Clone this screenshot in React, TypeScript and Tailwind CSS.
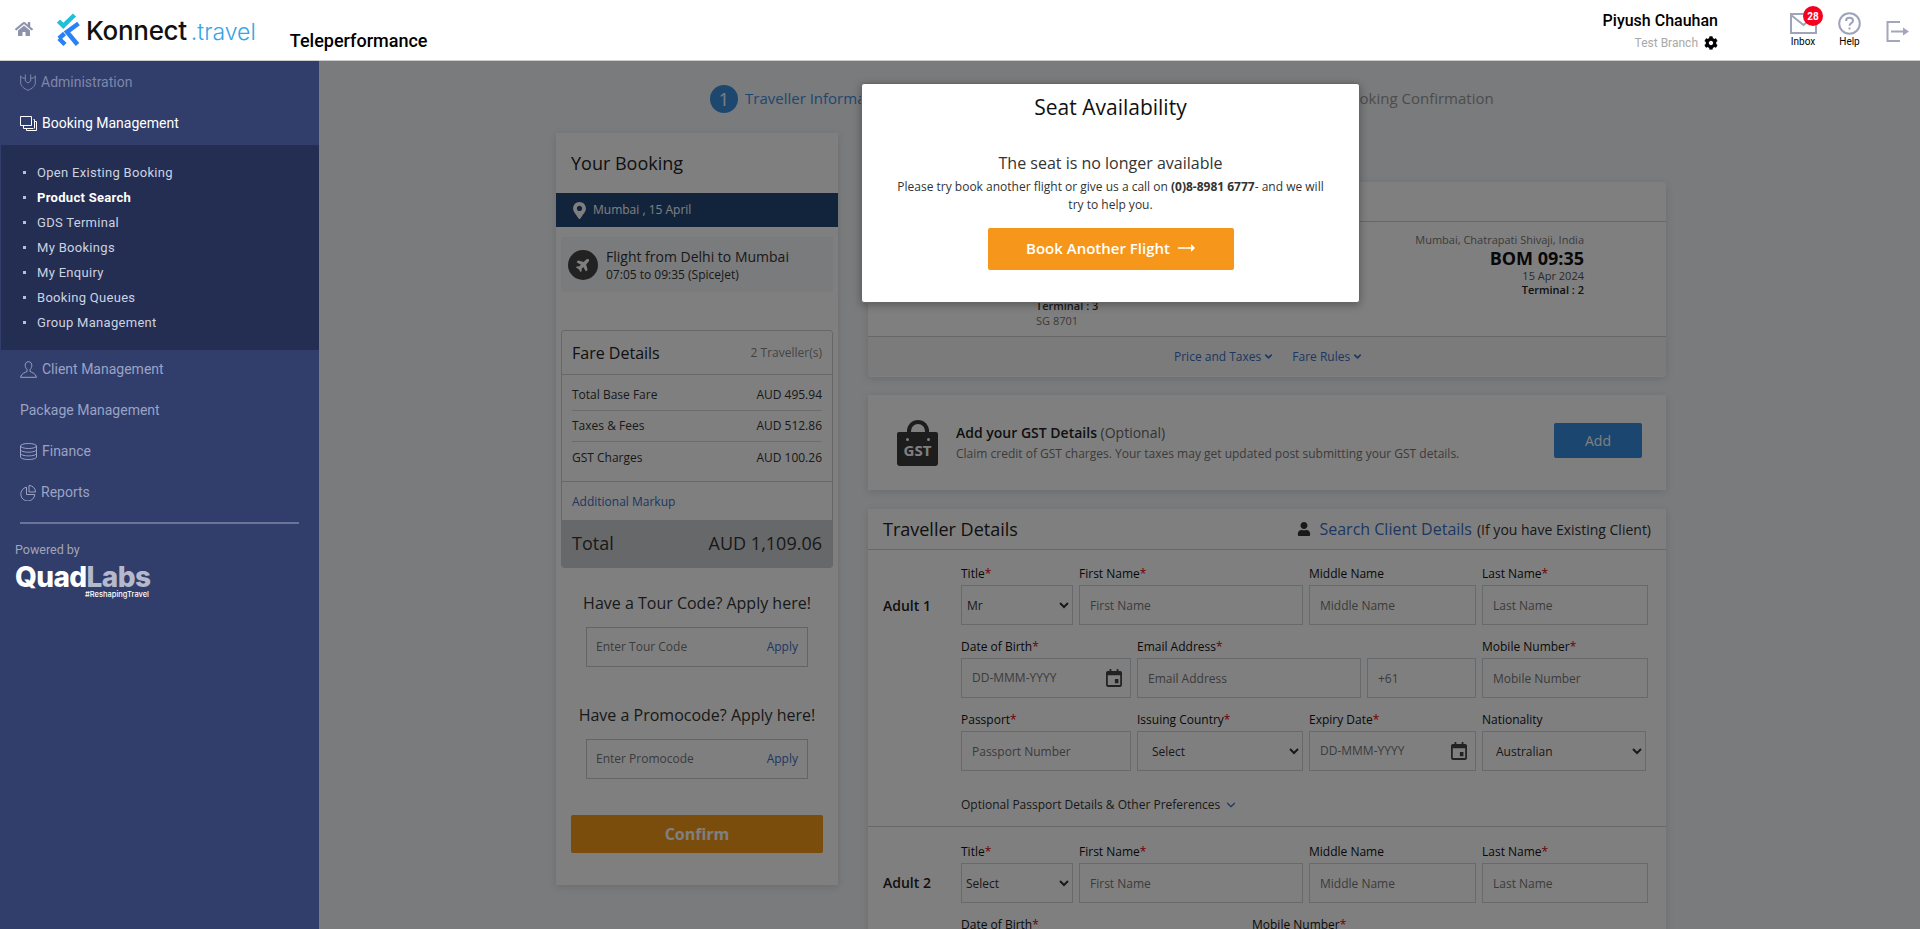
import { ReactNode } from "react";
import { ChevronDown } from "lucide-react";
import { FaHome, FaCog, FaUser, FaPlane, FaMapMarkerAlt } from "react-icons/fa";

const subMenu = ["Open Existing Booking", "Product Search", "GDS Terminal", "My Bookings", "My Enquiry", "Booking Queues", "Group Management"];

function NavRow({ icon, label, h, color }: { icon?: ReactNode; label: string; h: string; color: string }) {
  return (
    <div className={`flex items-center gap-[5px] pl-[20px] text-[14px] ${h} ${color}`}>
      {icon}
      <span>{label}</span>
    </div>
  );
}

function Sidebar() {
  return (
    <aside className="w-[319px] shrink-0 bg-[#313d6b] font-['Roboto',sans-serif]">
      <NavRow
        h="h-[41px] pt-[1px]"
        color="text-[#7f87a9]"
        label="Administration"
        icon={
          <svg width="16" height="17" viewBox="0 0 16 17" fill="none" stroke="currentColor" strokeWidth="1">
            <path d="M.7 1.500V9c0 3 3.300 5.700 7.300 7.300 4-1.600 7.300-4.300 7.300-7.300V1.500" />
            <path d="M.7 2.500c1.500 1.500 3 2 4.600 1.600M15.300 2.500c-1.500 1.500-3 2-4.600 1.600" />
            <path d="M5.300 .5v6.500L8 9l2.700-2V.5" />
          </svg>
        }
      />
      <NavRow
        h="h-[43px]"
        color="text-white"
        label="Booking Management"
        icon={
          <svg width="17" height="15" viewBox="0 0 17 15" fill="none" stroke="currentColor" strokeWidth="1">
            <path d="M.5.500h11v9H.500zM3.500 9.500v3h10M13.500 3.500h1v9M14.500 5.500h2v9H6.500v-2" />
          </svg>
        }
      />
      <ul className="ml-px bg-[#242d52] py-[15px] pl-[22px] text-[13px] tracking-[0.3px] text-[#cdd2e0]">
        {subMenu.map((item) => (
          <li key={item} className={`flex h-[25px] items-center gap-[11px] ${item === "Product Search" ? "font-bold text-white" : ""}`}>
            <span className="h-[3px] w-[3px] shrink-0 bg-[#b9bfd2]" />
            {item}
          </li>
        ))}
      </ul>
      <NavRow
        h="h-[40px] pb-[1px]"
        color="text-[#9aa3c4]"
        label="Client Management"
        icon={
          <svg width="17" height="17" viewBox="0 0 17 17" fill="none" stroke="currentColor" strokeWidth="1">
            <path d="M8.500.700c2 0 3.300 1.500 3.300 3.600 0 1.700-.8 3.300-1.800 4.200v2c1.500.9 6 2 6.500 5.800H.500c.5-3.800 5-4.900 6.500-5.800v-2C6 7.600 5.200 6 5.200 4.300 5.200 2.200 6.500.700 8.500.700z" />
          </svg>
        }
      />
      <NavRow h="h-[41px]" color="text-[#9aa3c4]" label="Package Management" />
      <NavRow
        h="h-[41px]"
        color="text-[#9aa3c4]"
        label="Finance"
        icon={
          <svg width="17" height="17" viewBox="0 0 17 17" fill="none" stroke="currentColor" strokeWidth="1">
            <ellipse cx="8.500" cy="3" rx="8" ry="2.500" />
            <path d="M.5 3v11c0 1.400 3.600 2.500 8 2.500s8-1.100 8-2.500V3M.5 6.700c0 1.400 3.600 2.500 8 2.500s8-1.100 8-2.500M.5 10.400c0 1.400 3.600 2.500 8 2.500s8-1.100 8-2.500" />
          </svg>
        }
      />
      <NavRow
        h="h-[41px]"
        color="text-[#9aa3c4]"
        label="Reports"
        icon={
          <svg width="16" height="16" viewBox="0 0 16 16" fill="none" stroke="currentColor" strokeWidth="1">
            <path d="M6.500 2.200A7 7 0 1 0 14.800 9.500H6.500zM9 .500a6.500 6.500 0 0 1 6.500 6.500H9z" />
          </svg>
        }
      />
      <div className="mx-[20px] mt-[9px] h-[2px] bg-[#6b7396]" />
      <p className="mt-[18px] pl-[15px] text-[12.500px] leading-[15px] text-[#a3a6b5]">Powered by</p>
      <div className="ml-[15px] mt-[8px] w-[134px] font-['Inter',sans-serif] leading-none">
        <div className="text-[28px] font-extrabold leading-[25px] tracking-[-0.6px] text-white">
          Quad<span className="text-[#b5b9cc]">Labs</span>
        </div>
        <div className="text-right text-[7.500px] font-medium leading-[9px] text-white">#ReshapingTravel</div>
      </div>
    </aside>
  );
}

function Header() {
  return (
    <header className="flex h-[61px] shrink-0 items-center border-b border-[#cfcfcf] bg-white pr-[10px] font-['Roboto',sans-serif]">
      <FaHome className="ml-[15px] mt-[-2px] text-[#8d93ad]" size={18} />
      <svg className="ml-[24px]" width="24" height="34" viewBox="0 0 24 34" fill="none" strokeWidth="4.500">
        <path d="M1.500 8l4.800 4.800L17.500 2" stroke="#1fc0d8" />
        <path d="M21.500 10.500L10 19l10.500 12.500" stroke="#2a80f5" />
        <path d="M2 25.500l5.500-5M2 25.500l6 6" stroke="#2a80f5" />
      </svg>
      <div className="ml-[5px] flex items-baseline font-['Inter',sans-serif]">
        <span className="text-[26px] font-medium tracking-[-0.3px] text-[#111]">Konnect</span>
        <span className="ml-[4px] text-[23px] font-light text-[#35a4ea]">.travel</span>
      </div>
      <span className="ml-[34px] mt-[21px] text-[18px] font-medium text-black">Teleperformance</span>
      <div className="ml-auto mr-[65px] flex flex-col items-end">
        <span className="text-[16px] font-medium leading-[20px] text-black">Piyush Chauhan</span>
        <span className="mt-[5px] flex items-center gap-[6px] text-[12px] leading-[14px] text-[#a9a9a9]">
          Test Branch <FaCog className="text-black" size={14} />
        </span>
      </div>
      <div className="relative mr-[15px] flex w-[40px] flex-col items-center pt-px">
        <svg width="27" height="21" viewBox="0 0 27 21" fill="none" stroke="#9ea4bb" strokeWidth="2">
          <path d="M1 1h25v19H1zM1 2l12.500 10L26 2" />
        </svg>
        <span className="mt-[2px] text-[10px] leading-[12px] text-black">Inbox</span>
        <span className="absolute left-[20px] top-[-6px] flex h-[20px] w-[20px] items-center justify-center rounded-full bg-[#f7001f] text-[10px] font-bold text-white">28</span>
      </div>
      <div className="mr-[25px] flex flex-col items-center">
        <svg width="23" height="23" viewBox="0 0 23 23" fill="none" stroke="#9ea4bb" strokeWidth="2">
          <circle cx="11.500" cy="11.500" r="10.300" />
          <path d="M8 9c0-2 1.500-3.200 3.500-3.200S15 7 15 8.700c0 2.300-3.500 2.600-3.500 5" />
          <path d="M11.500 15.500v2" />
        </svg>
        <span className="mt-px text-[10px] leading-[12px] text-black">Help</span>
      </div>
      <svg className="mt-[2px]" width="24" height="21" viewBox="0 0 24 21" fill="none" stroke="#a2a7bd" strokeWidth="2">
        <path d="M14 1H1.500v19H14M5 10.500h13" />
        <path d="M17 6.500l6 4-6 4z" fill="#a2a7bd" stroke="none" />
      </svg>
    </header>
  );
}

function Label({ text, req }: { text: string; req?: boolean }) {
  return (
    <div className="h-[19px] text-[12px] leading-[15px] text-[#111]">
      {text}
      {req && <span className="text-[#e00000]">*</span>}
    </div>
  );
}

function TextBox({ w, label, req, placeholder }: { w: string; label: string; req?: boolean; placeholder: string }) {
  return (
    <div className={w}>
      <Label text={label} req={req} />
      <input
        placeholder={placeholder}
        className="h-[40px] w-full border border-[#ced4da] bg-white px-[10px] text-[12px] text-[#555] outline-none placeholder:text-[#777]"
      />
    </div>
  );
}

function DateBox({ w, label }: { w: string; label: string }) {
  return (
    <div className={w}>
      <Label text={label} req />
      <div className="flex h-[40px] items-center border border-[#ced4da] bg-white pl-[10px] pr-[8px]">
        <input placeholder="DD-MMM-YYYY" className="min-w-0 flex-1 text-[12px] outline-none placeholder:text-[#777]" />
        <svg width="16" height="20" viewBox="0 0 18 20" fill="#444">
          <path d="M4 0h2v2h6V0h2v2h2a2 2 0 0 1 2 2v14a2 2 0 0 1-2 2H2a2 2 0 0 1-2-2V4a2 2 0 0 1 2-2h2zM2 7v11h14V7zm8 4h4v5h-4z" />
        </svg>
      </div>
    </div>
  );
}

function SelectBox({ w, label, req, value, pad }: { w: string; label: string; req?: boolean; value: string; pad: string }) {
  return (
    <div className={w}>
      <Label text={label} req={req} />
      <select className={`h-[40px] w-full border border-[#ced4da] bg-white text-[12px] text-[#333] outline-none ${pad}`} defaultValue={value}>
        <option>{value}</option>
      </select>
    </div>
  );
}

function FareRow({ name, amount, line }: { name: string; amount: string; line?: boolean }) {
  return (
    <div className={`flex h-[31px] items-center justify-between text-[12px] text-[#333] ${line ? "border-b border-[#d9d9d9]" : ""}`}>
      <span>{name}</span>
      <span>{amount}</span>
    </div>
  );
}

function CodeBox({ title, placeholder }: { title: string; placeholder: string }) {
  return (
    <div className="flex flex-col items-center">
      <h4 className="text-[16px] leading-[24px] text-[#333]">{title}</h4>
      <div className="mt-[12px] flex h-[40px] w-[222px] items-center justify-between border border-[#c9c9c9] pl-[9px] pr-[9px] text-[12px]">
        <span className="text-[#777]">{placeholder}</span>
        <span className="text-[#3a6fc4]">Apply</span>
      </div>
    </div>
  );
}

function BookingCard() {
  return (
    <section className="h-[752px] w-[282px] shrink-0 bg-white shadow-[0_2px_8px_rgba(0,0,0,0.12)]">
      <h3 className="flex h-[60px] items-center pl-[15px] text-[18px] font-medium text-[#222]">Your Booking</h3>
      <div className="flex h-[34px] items-center gap-[5px] bg-[#244879] pl-[15px] text-[12px] text-white">
        <FaMapMarkerAlt size={17} />
        Mumbai , 15 April
      </div>
      <div className="mx-[5px] mt-[10px] flex h-[55px] items-center gap-[8px] bg-[#f4f6fa] pl-[7px]">
        <span className="flex h-[30px] w-[30px] items-center justify-center rounded-full bg-[#444]">
          <FaPlane className="-rotate-45 text-white" size={15} />
        </span>
        <div className="text-[#333]">
          <div className="text-[14px] leading-[20px]">Flight from Delhi to Mumbai</div>
          <div className="text-[12px] leading-[16px]">07:05 to 09:35 (SpiceJet)</div>
        </div>
      </div>
      <div className="mx-[5px] mt-[38px] h-[238px] overflow-hidden rounded-[3px] border border-[#cfcfcf]">
        <div className="flex h-[44px] items-center justify-between border-b border-[#cfcfcf] pl-[10px] pr-[10px]">
          <span className="text-[16px] font-medium text-[#222]">Fare Details</span>
          <span className="text-[12px] text-[#888]">2 Traveller(s)</span>
        </div>
        <div className="mx-[10px] mt-[5px]">
          <FareRow name="Total Base Fare" amount="AUD 495.94" line />
          <FareRow name="Taxes & Fees" amount="AUD 512.86" line />
          <FareRow name="GST Charges" amount="AUD 100.26" />
        </div>
        <div className="mt-[8px] flex h-[39px] items-center border-t border-[#cfcfcf] pl-[10px] pt-[1px] text-[12px] text-[#3a6fc4]">Additional Markup</div>
        <div className="flex h-[47px] items-center justify-between bg-[#cfd0d4] pl-[10px] pr-[10px] text-[#333]">
          <span className="text-[18px]">Total</span>
          <span className="text-[18px]">AUD 1,109.06</span>
        </div>
      </div>
      <div className="mt-[23px]">
        <CodeBox title="Have a Tour Code? Apply here!" placeholder="Enter Tour Code" />
      </div>
      <div className="mt-[36px]">
        <CodeBox title="Have a Promocode? Apply here!" placeholder="Enter Promocode" />
      </div>
      <button className="mx-[15px] mt-[36px] h-[38px] w-[252px] rounded-[2px] bg-[#f69a18] text-[16px] font-bold text-white">Confirm</button>
    </section>
  );
}

function FlightCard() {
  return (
    <section className="mt-[49px] h-[195px] rounded-[3px] bg-white shadow-[0_2px_8px_rgba(0,0,0,0.12)]">
      <div className="h-[40px] border-b border-[#cfcfcf]" />
      <div className="flex h-[115px] justify-between border-b border-[#cfcfcf] pl-[168px] pr-[82px] pt-[11px]">
        <div className="flex flex-col justify-end pb-[8px] text-[11px] leading-[15px] text-[#333]">
          <div className="font-semibold">Terminal : 3</div>
          <div className="text-[#777]">SG 8701</div>
        </div>
        <div className="text-right text-[11px] leading-[14px] text-[#555]">
          <div className="text-[#777]">Mumbai, Chatrapati Shivaji, India</div>
          <div className="text-[18px] font-bold leading-[22px] text-[#111]">BOM 09:35</div>
          <div>15 Apr 2024</div>
          <div className="font-semibold text-[#222]">Terminal : 2</div>
        </div>
      </div>
      <div className="flex h-[39px] items-center bg-[#f6f6f8] pl-[306px] text-[12px] text-[#3a6fc4]">
        <span className="flex items-center gap-[2px]">
          Price and Taxes <ChevronDown size={11} strokeWidth={3.500} />
        </span>
        <span className="ml-[18px] flex items-center gap-[2px]">
          Fare Rules <ChevronDown size={11} strokeWidth={3.500} />
        </span>
      </div>
    </section>
  );
}

function GstCard() {
  return (
    <section className="mt-[18px] flex h-[95px] items-center bg-white pl-[29px] pr-[24px] shadow-[0_2px_8px_rgba(0,0,0,0.12)]">
      <div className="flex h-[46px] w-[41px] shrink-0 flex-col items-center">
        <div className="mb-[-5px] h-[17px] w-[22px] rounded-t-[11px] border-[4px] border-b-0 border-[#3a3a3a]" />
        <div className="flex h-[34px] w-[41px] flex-col items-center rounded-b-[3px] rounded-t-[2px] bg-[#3a3a3a] pt-[6px]">
          <div className="flex w-[24px] justify-between">
            <span className="h-[3px] w-[3px] rounded-full bg-white" />
            <span className="h-[3px] w-[3px] rounded-full bg-white" />
          </div>
          <div className="text-[15px] font-bold leading-[19px] text-white">GST</div>
        </div>
      </div>
      <div className="ml-[18px] flex-1">
        <div className="text-[14px] leading-[20px] text-[#222]">
          <span className="font-semibold">Add your GST Details</span> <span className="text-[#666]">(Optional)</span>
        </div>
        <div className="mt-[3px] text-[12px] leading-[16px] text-[#777]">Claim credit of GST charges. Your taxes may get updated post submitting your GST details.</div>
      </div>
      <button className="mt-[-5px] h-[35px] w-[88px] rounded-[2px] bg-[#348cde] text-[14px] text-white">Add</button>
    </section>
  );
}

function TravellerCard() {
  return (
    <section className="mt-[19px] bg-white pb-[40px] shadow-[0_2px_8px_rgba(0,0,0,0.12)]">
      <div className="flex h-[41px] items-center justify-between border-b border-[#cfcfcf] pl-[15px] pr-[15px]">
        <h3 className="text-[18px] font-medium text-[#222]">Traveller Details</h3>
        <div className="flex items-center text-[#333]">
          <FaUser size={14} className="mr-[8px]" />
          <span className="text-[16px] text-[#3a6fc4]">Search Client Details</span>
          <span className="ml-[5px] text-[14px]">(If you have Existing Client)</span>
        </div>
      </div>
      <div className="relative border-b border-[#cfcfcf] pb-[12px] pl-[93px] pt-[16px]">
        <span className="absolute left-[15px] top-[45px] text-[14px] font-semibold text-[#222]">Adult 1</span>
        <div className="flex gap-[6px]">
          <SelectBox w="w-[112px]" label="Title" req value="Mr" pad="pl-px" />
          <TextBox w="w-[224px]" label="First Name" req placeholder="First Name" />
          <TextBox w="w-[167px]" label="Middle Name" placeholder="Middle Name" />
          <TextBox w="w-[166px]" label="Last Name" req placeholder="Last Name" />
        </div>
        <div className="mt-[14px] flex gap-[6px]">
          <DateBox w="w-[170px]" label="Date of Birth" />
          <TextBox w="w-[224px]" label="Email Address" req placeholder="Email Address" />
          <TextBox w="w-[109px]" label=" " placeholder="+61" />
          <TextBox w="w-[166px]" label="Mobile Number" req placeholder="Mobile Number" />
        </div>
        <div className="mt-[14px] flex gap-[6px]">
          <TextBox w="w-[170px]" label="Passport" req placeholder="Passport Number" />
          <SelectBox w="w-[166px]" label="Issuing Country" req value="Select" pad="pl-[10px]" />
          <DateBox w="w-[167px]" label="Expiry Date" />
          <SelectBox w="w-[164px]" label="Nationality" value="Australian" pad="pl-[9px]" />
        </div>
        <div className="mt-[25px] flex items-center gap-[4px] text-[12px] leading-[18px] text-[#333]">
          Optional Passport Details &amp; Other Preferences <ChevronDown size={14} className="text-[#3a6fc4]" />
        </div>
      </div>
      <div className="relative pl-[93px] pt-[17px]">
        <span className="absolute left-[15px] top-[45px] text-[14px] font-semibold text-[#222]">Adult 2</span>
        <div className="flex gap-[6px]">
          <SelectBox w="w-[112px]" label="Title" req value="Select" pad="pl-0" />
          <TextBox w="w-[224px]" label="First Name" req placeholder="First Name" />
          <TextBox w="w-[167px]" label="Middle Name" placeholder="Middle Name" />
          <TextBox w="w-[166px]" label="Last Name" req placeholder="Last Name" />
        </div>
        <div className="mt-[14px] flex text-[12px]">
          <div className="w-[291px]">
            <Label text="Date of Birth" req />
          </div>
          <Label text="Mobile Number" req />
        </div>
      </div>
    </section>
  );
}

function SeatModal() {
  return (
    <div className="absolute left-[542px] top-[22px] flex h-[220px] w-[499px] flex-col items-center rounded-[3px] border border-[#666] bg-white px-[30px] font-['Open_Sans',sans-serif] text-[#333] shadow-[0_2px_8px_rgba(0,0,0,0.3)]">
      <h2 className="mt-[9px] text-[21px] font-medium leading-[28px] text-[#111]">Seat Availability</h2>
      <p className="mt-[30px] text-[16px] leading-[24px]">The seat is no longer available</p>
      <p className="mt-[3px] text-center text-[12px] leading-[18px]">
        Please try book another flight or give us a call on <b className="font-bold">(0)8-8981 6777</b>- and we will try to help you.
      </p>
      <button className="mt-[14px] flex h-[42px] w-[246px] items-center justify-center gap-[8px] rounded-[2px] bg-[#f6961a] pb-[2px] text-[15px] font-semibold text-white">
        Book Another Flight
        <svg width="17" height="8" viewBox="0 0 17 8" fill="white">
          <path d="M0 3.200h13V0l4 4-4 4V4.800H0z" />
        </svg>
      </button>
    </div>
  );
}

export default function App() {
  return (
    <div className="flex h-screen flex-col overflow-hidden bg-[#f4f6fa]">
      <Header />
      <div className="flex min-h-0 flex-1">
        <Sidebar />
        <main className="relative min-w-0 flex-1 overflow-hidden font-['Open_Sans',sans-serif]">
          <div className="flex h-[72px] items-start pl-[391px] pt-[24px] text-[15px]">
            <span className="flex h-[28px] w-[28px] items-center justify-center rounded-full bg-[#3d8fe0] text-[18px] text-white">1</span>
            <span className="ml-[7px] mt-[-1px] leading-[28px] text-[#3d8fe0]">Traveller Information</span>
            <span className="ml-[448px] mt-[-1px] leading-[28px] text-[#999]">Booking Confirmation</span>
          </div>
          <div className="flex pl-[237px]">
            <BookingCard />
            <div className="ml-[30px] w-[798px] shrink-0">
              <FlightCard />
              <GstCard />
              <TravellerCard />
            </div>
          </div>
          <div className="absolute inset-0 bg-black/50" />
          <SeatModal />
        </main>
      </div>
    </div>
  );
}
